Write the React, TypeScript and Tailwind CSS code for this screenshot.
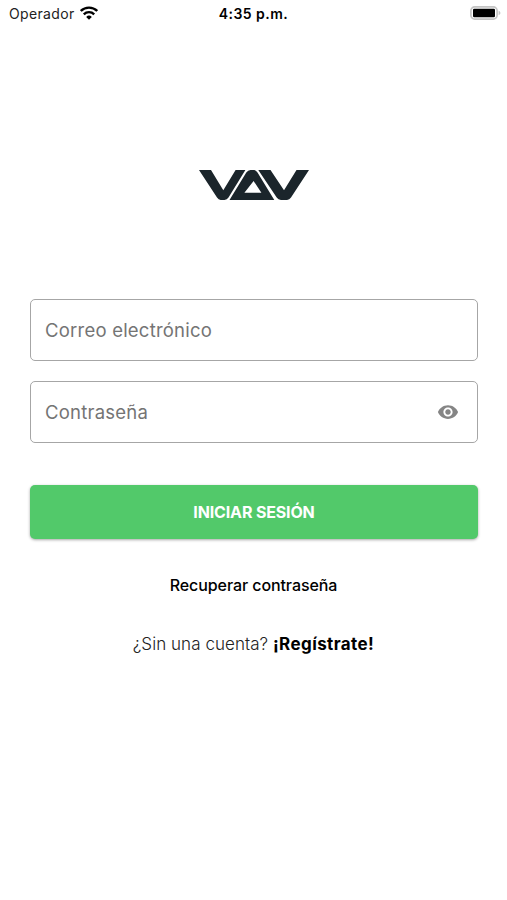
import { useState } from 'react';

function WifiIcon() {
  return (
    <svg className="w-[18px] h-[14px]" viewBox="0 0 18 14" fill="none" stroke="#000" strokeWidth="2.4">
      <path d="M0.8 5a11.7 11.7 0 0 1 16.4 0" />
      <path d="M3.8 8.3a7.4 7.4 0 0 1 10.4 0" />
      <path d="M9 13.8 6.2 10.9a4 4 0 0 1 5.6 0z" fill="#000" stroke="none" />
    </svg>
  );
}

function BatteryIcon() {
  return (
    <svg className="w-[31px] h-[14px]" viewBox="0 0 31 14">
      <rect x="0.9" y="0.9" width="26.2" height="12.2" rx="3.8" fill="#fff" stroke="#c4c4c4" strokeWidth="1.7" />
      <rect x="3" y="2.8" width="22" height="8.4" rx="1.2" fill="#000" />
      <path d="M28.6 4.8v4.4c1.1-.4 1.8-1.2 1.8-2.2s-.7-1.8-1.8-2.2z" fill="#c4c4c4" />
    </svg>
  );
}

function Logo() {
  return (
    <svg className="w-[110px] h-[30px]" viewBox="0 0 110 30" fill="#1b252b">
      <path d="M0 0h12L24.3 20.3 36.6 0h9.8L29.5 27.6Q28 30 25.5 30h-3.8Q19.5 30 18 27.600z" />
      <path d="M30.5 30 47.3 2.6Q49 0 51.5 0h3.600Q57 0 58.500 2.600L75.300 30zM45.400 22.800h17L54.600 11z" fillRule="evenodd" />
      <path d="M59.3 0H71.500L85 20.300 97.500 0H110L92 27.600Q90.500 30 88 30h-6Q79.200 30 77.700 27.600z" />
    </svg>
  );
}

function EyeIcon() {
  return (
    <svg className="w-[22px] h-[22px]" viewBox="0 0 24 24" fill="#858585">
      <path d="M12 4.5C7 4.5 2.73 7.61 1 12c1.73 4.39 6 7.5 11 7.5s9.27-3.11 11-7.5c-1.73-4.39-6-7.5-11-7.5zM12 17c-2.76 0-5-2.24-5-5s2.24-5 5-5 5 2.24 5 5-2.24 5-5 5zm0-8c-1.66 0-3 1.34-3 3s1.34 3 3 3 3-1.34 3-3-1.34-3-3-3z" />
    </svg>
  );
}

const fieldClass =
  'block w-full h-[62px] rounded-[5px] border border-[#a6a6a6] pl-[14px] text-[18.5px] tracking-[0.22px] text-gray-800 placeholder:text-[#747474] outline-none focus:border-[#52c96a]';

export default function App() {
  const [showPassword, setShowPassword] = useState(false);

  return (
    <div className="h-[900px] w-full bg-white font-['Inter',sans-serif] text-black">
      {/* Status bar */}
      <header className="grid h-[26px] grid-cols-3 items-center pl-[9px] pr-[6px]">
        <div className="flex items-center gap-[5px] text-[14px] tracking-[0.35px] text-[#222]">
          <span>Operador</span>
          <WifiIcon />
        </div>
        <span className="pr-[3px] text-center text-[14px] font-semibold tracking-[0.45px]">4:35 p.m.</span>
        <div className="flex justify-end">
          <BatteryIcon />
        </div>
      </header>

      <main className="flex flex-col items-center pl-[30px] pr-[29px] pt-36">
        <Logo />

        {/* Login form */}
        <form className="mt-[99px] w-full" onSubmit={(e) => e.preventDefault()}>
          <input type="email" placeholder="Correo electrónico" className={fieldClass} />
          <div className="relative mt-5">
            <input
              type={showPassword ? 'text' : 'password'}
              placeholder="Contraseña"
              className={fieldClass}
            />
            <button
              type="button"
              aria-label="Mostrar contraseña"
              className="absolute right-[19px] top-5"
              onClick={() => setShowPassword(!showPassword)}
            >
              <EyeIcon />
            </button>
          </div>
          <button
            type="submit"
            className="mt-[42px] block h-[54px] w-full rounded-[5px] bg-[#52c96a] text-[16px] font-bold tracking-[-0.15px] text-white shadow-[0_1px_3px_rgba(0,0,0,0.35)]"
          >
            INICIAR SESIÓN
          </button>
        </form>

        <button className="mt-[34px] pr-px text-[16px] leading-6 font-medium tracking-[-0.08px]">
          Recuperar contraseña
        </button>

        <p className="mt-[35px] pr-px text-[17px] leading-6 tracking-[0.05px]">
          <span className="font-light text-[#222]">¿Sin una cuenta? </span>
          <button className="font-bold tracking-[0.4px]">¡Regístrate!</button>
        </p>
      </main>
    </div>
  );
}
